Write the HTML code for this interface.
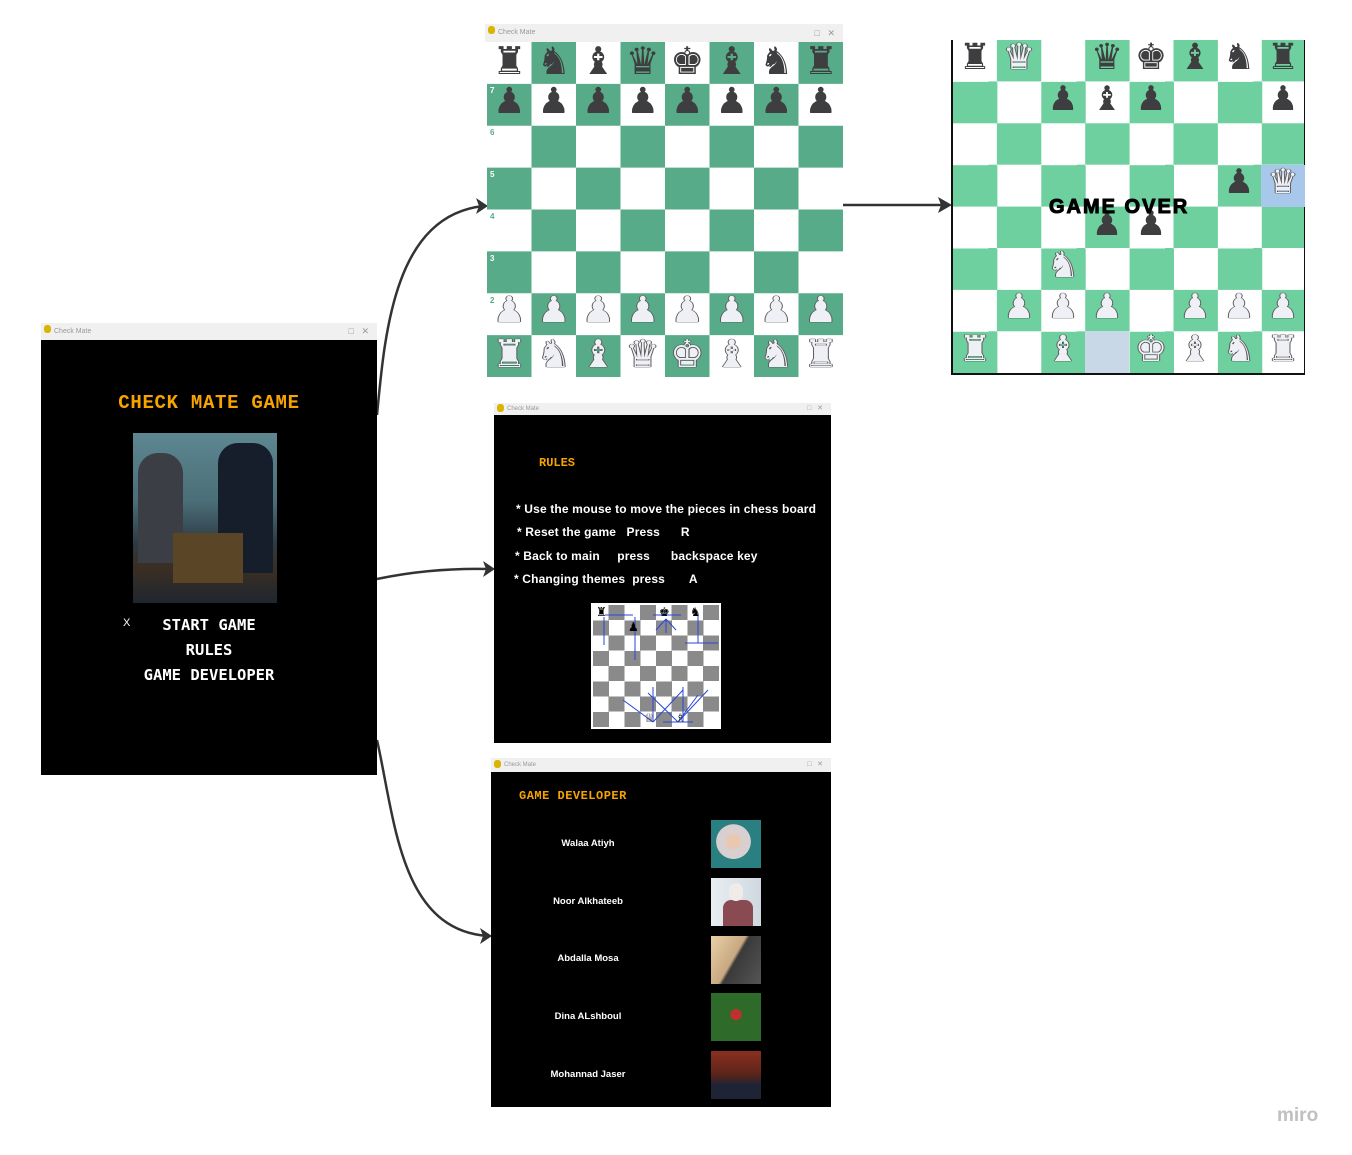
<!DOCTYPE html>
<html><head><meta charset="utf-8">
<style>
*{margin:0;padding:0;box-sizing:border-box}
body{width:1352px;height:1155px;background:#fff;position:relative;overflow:hidden;font-family:"Liberation Sans","DejaVu Sans",sans-serif}
.abs{position:absolute}
.tb{position:absolute;background:#f0f0f0;font-size:7px;color:#999;padding-left:13px;line-height:100%}
.tb i{position:absolute;left:3px;top:2px;width:7px;height:8px;background:#d9b400;border-radius:3px}
.tb b{position:absolute;right:8px;top:0;font-weight:normal;color:#999;font-size:9px}
.blk{position:absolute;background:#000}
.px{font-family:"Liberation Mono","DejaVu Sans Mono",monospace;font-weight:bold;letter-spacing:0}
.or{color:#f7a400}
.menu{color:#fff;font-weight:bold;font-family:"DejaVu Sans Mono","Liberation Mono",monospace;font-size:15.5px;text-align:center;position:absolute;width:336px;left:41px}
.board{position:absolute}
.row{display:flex}
.row span{flex:1;text-align:center;font-family:"DejaVu Sans",sans-serif;line-height:1}
.b{color:#3e3e40}
.w{color:#efeff6;text-shadow:0 0 1px #444,0 0 1px #444,1px 0 0 #666,-1px 0 0 #666}
.rules{position:absolute;left:515px;color:#fff;font-size:12px;font-weight:bold;white-space:pre;letter-spacing:0.15px}
.name{position:absolute;width:200px;left:488px;text-align:center;color:#fff;font-size:9.5px;font-weight:bold}
.ph{position:absolute;left:711px;width:50px;height:48px}
</style></head><body>

<svg class="abs" style="left:0;top:0" width="1352" height="1155">
<g fill="none" stroke="#333" stroke-width="2.5">
<path d="M377 415 C385 330 395 215 484 206"/>
<path d="M377 579 C410 572 450 568 490 569"/>
<path d="M377 740 C395 820 400 930 488 936"/>
<path d="M843 205 L946 205"/>
</g>
<g fill="#333">
<path d="M488 206 L476 198 L479 206 L476 214Z"/>
<path d="M495 569 L483 561 L486 569 L483 577Z"/>
<path d="M492 936 L480 928 L483 936 L480 944Z"/>
<path d="M952 205 L938 197 L941 205 L938 213Z"/>
</g>
</svg>

<div class="tb" style="left:41px;top:323px;width:336px;height:17px;line-height:17px"><i></i>Check Mate<b>□ &nbsp; ✕</b></div>
<div class="blk" style="left:41px;top:340px;width:336px;height:435px"></div>
<div class="abs px or" style="left:41px;width:336px;text-align:center;top:392px;font-size:19px;letter-spacing:0.7px">CHECK MATE GAME</div>
<div class="abs" style="left:133px;top:433px;width:144px;height:170px;background:linear-gradient(180deg,#5d8791 0%,#4b6e78 40%,#2d3a44 65%,#3a2e22 80%,#1f2630 100%)">
<div class="abs" style="left:5px;top:20px;width:45px;height:110px;background:#3b3f45;border-radius:20px 20px 0 0"></div>
<div class="abs" style="left:85px;top:10px;width:55px;height:130px;background:#161e2c;border-radius:20px 20px 0 0"></div>
<div class="abs" style="left:40px;top:100px;width:70px;height:50px;background:#5a4526"></div>
</div>
<div class="abs" style="left:123px;top:617px;color:#fff;font-size:11px">X</div>
<div class="menu" style="top:616px">START GAME</div>
<div class="menu" style="top:641px">RULES</div>
<div class="menu" style="top:666px">GAME DEVELOPER</div>

<div class="tb" style="left:485px;top:24px;width:358px;height:18px;line-height:18px"><i></i>Check Mate<b>□ &nbsp; ✕</b></div>
<div class="board" style="left:487px;top:42px;width:356px;height:335px;background:conic-gradient(#58ab88 0 25%,#fff 0 50%,#58ab88 0 75%,#fff 0);background-size:89px 83.75px">
<div class="row" style="height:41.9px;font-size:38px"><span class="b">♜</span><span class="b">♞</span><span class="b">♝</span><span class="b">♛</span><span class="b">♚</span><span class="b">♝</span><span class="b">♞</span><span class="b">♜</span></div>
<div class="row" style="height:41.9px;font-size:36px"><span class="b">♟</span><span class="b">♟</span><span class="b">♟</span><span class="b">♟</span><span class="b">♟</span><span class="b">♟</span><span class="b">♟</span><span class="b">♟</span></div>
<div class="row" style="height:41.9px"></div><div class="row" style="height:41.9px"></div><div class="row" style="height:41.9px"></div><div class="row" style="height:41.9px"></div>
<div class="row" style="height:41.9px;font-size:36px"><span class="w">♟</span><span class="w">♟</span><span class="w">♟</span><span class="w">♟</span><span class="w">♟</span><span class="w">♟</span><span class="w">♟</span><span class="w">♟</span></div>
<div class="row" style="height:41.9px;font-size:38px"><span class="w">♜</span><span class="w">♞</span><span class="w">♝</span><span class="w">♛</span><span class="w">♚</span><span class="w">♝</span><span class="w">♞</span><span class="w">♜</span></div>
<div class="abs" style="left:3px;top:44px;font-size:8px;color:#fff;font-weight:bold">7</div>
<div class="abs" style="left:3px;top:86px;font-size:8px;color:#58ab88;font-weight:bold">6</div>
<div class="abs" style="left:3px;top:128px;font-size:8px;color:#fff;font-weight:bold">5</div>
<div class="abs" style="left:3px;top:170px;font-size:8px;color:#58ab88;font-weight:bold">4</div>
<div class="abs" style="left:3px;top:212px;font-size:8px;color:#fff;font-weight:bold">3</div>
<div class="abs" style="left:3px;top:254px;font-size:8px;color:#58ab88;font-weight:bold">2</div>
</div>

<div class="board" style="left:951px;top:40px;width:354px;height:335px;border-left:2px solid #111;border-bottom:2px solid #111;border-right:1px solid #111;background:conic-gradient(#6dd09e 0 25%,#fff 0 50%,#6dd09e 0 75%,#fff 0);background-size:88.3px 83.3px">
<div class="abs" style="left:308px;top:125px;width:44px;height:42px;background:#a7c8ea"></div>
<div class="abs" style="left:132px;top:291px;width:44px;height:42px;background:#c9d8e6"></div>
<div class="abs" style="left:0;top:0;width:352px">
<div class="row" style="height:41.7px;font-size:36px"><span class="b">♜</span><span class="w">♛</span><span></span><span class="b">♛</span><span class="b">♚</span><span class="b">♝</span><span class="b">♞</span><span class="b">♜</span></div>
<div class="row" style="height:41.7px;font-size:34px"><span></span><span></span><span class="b">♟</span><span class="b">♝</span><span class="b">♟</span><span></span><span></span><span class="b">♟</span></div>
<div class="row" style="height:41.7px"></div>
<div class="row" style="height:41.7px;font-size:34px"><span></span><span></span><span></span><span></span><span></span><span></span><span class="b">♟</span><span class="w">♛</span></div>
<div class="row" style="height:41.7px;font-size:34px"><span></span><span></span><span></span><span class="b">♟</span><span class="b">♟</span><span></span><span></span><span></span></div>
<div class="row" style="height:41.7px;font-size:36px"><span></span><span></span><span class="w">♞</span><span></span><span></span><span></span><span></span><span></span></div>
<div class="row" style="height:41.7px;font-size:34px"><span></span><span class="w">♟</span><span class="w">♟</span><span class="w">♟</span><span></span><span class="w">♟</span><span class="w">♟</span><span class="w">♟</span></div>
<div class="row" style="height:41.7px;font-size:36px"><span class="w">♜</span><span></span><span class="w">♝</span><span></span><span class="w">♚</span><span class="w">♝</span><span class="w">♞</span><span class="w">♜</span></div>
</div>
<div class="abs" style="left:96px;top:156px;font-size:20px;font-weight:900;color:#000;letter-spacing:2px;font-family:'Liberation Sans',sans-serif;-webkit-text-stroke:1px #000">GAME OVER</div>
</div>

<div class="tb" style="left:494px;top:403px;width:337px;height:12px;line-height:12px;font-size:6px"><i style="top:1px"></i>Check Mate<b style="font-size:7px">□ &nbsp; ✕</b></div>
<div class="blk" style="left:494px;top:415px;width:337px;height:328px"></div>
<div class="abs px or" style="left:539px;top:456px;font-size:12px">RULES</div>
<div class="rules" style="top:502px;left:516px">* Use the mouse to move the pieces in chess board</div>
<div class="rules" style="top:525px;left:517px">* Reset the game   Press      R</div>
<div class="rules" style="top:549px">* Back to main     press      backspace key</div>
<div class="rules" style="top:572px;left:514px">* Changing themes  press       A</div>
<div class="abs" style="left:591px;top:603px;width:130px;height:126px;background:#fff;padding:2px">
<div style="width:126px;height:122px;background:conic-gradient(#8a8a8a 0 25%,#fff 0 50%,#8a8a8a 0 75%,#fff 0);background-size:31.5px 30.5px;position:relative">
<svg class="abs" style="left:0;top:0" width="126" height="122"><g stroke="#2846d8" stroke-width="1" fill="none">
<path d="M12 10 H40 M11 12 V40 M42 12 V55 M60 10 H88 M73 14 V28 M73 14 L63 25 M73 14 L83 25 M105 10 V38 H125 M92 38 H105 M90 82 V117 M70 117 H100 M85 117 L55 88 M85 117 L115 85 M85 117 L105 90 M60 117 L30 95 M60 117 L90 85 M60 117 V82"/></g></svg>
<div class="abs" style="left:3px;top:0;font-size:12px;color:#000">♜</div>
<div class="abs" style="left:35px;top:15px;font-size:12px;color:#000">♟</div>
<div class="abs" style="left:66px;top:0;font-size:12px;color:#000">♚</div>
<div class="abs" style="left:97px;top:0;font-size:12px;color:#000">♞</div>
<div class="abs" style="left:51px;top:106px;font-size:12px;color:#333">♕</div>
<div class="abs" style="left:82px;top:106px;font-size:12px;color:#333">♗</div>
</div></div>

<div class="tb" style="left:491px;top:758px;width:340px;height:14px;line-height:14px;font-size:6px"><i style="top:2px"></i>Check Mate<b style="font-size:7px">□ &nbsp; ✕</b></div>
<div class="blk" style="left:491px;top:772px;width:340px;height:335px"></div>
<div class="abs px or" style="left:519px;top:789px;font-size:12px;letter-spacing:0.5px">GAME DEVELOPER</div>
<div class="name" style="top:838px">Walaa Atiyh</div>
<div class="name" style="top:896px">Noor Alkhateeb</div>
<div class="name" style="top:953px">Abdalla Mosa</div>
<div class="name" style="top:1011px">Dina ALshboul</div>
<div class="name" style="top:1069px">Mohannad Jaser</div>
<div class="ph" style="top:820px;background:radial-gradient(circle at 45% 45%,#e8c8b0 0 20%,#d8d0d0 21% 45%,#2a7f80 46%)"></div>
<div class="ph" style="top:878px;background:linear-gradient(90deg,#e8eef2,#cfd8e0);"><div class="abs" style="left:12px;top:22px;width:30px;height:26px;background:#8a4a52;border-radius:8px 8px 0 0"></div><div class="abs" style="left:18px;top:5px;width:14px;height:18px;background:#f0ebe6;border-radius:7px"></div></div>
<div class="ph" style="top:936px;background:linear-gradient(120deg,#e8d0a8 0%,#c8a880 45%,#3a3a3a 50%,#555 100%)"></div>
<div class="ph" style="top:993px;background:radial-gradient(circle at 50% 45%,#c03030 0 15%,#2e6a2a 16%)"></div>
<div class="ph" style="top:1051px;background:linear-gradient(180deg,#8a3020,#5a2418 50%,#1e2436 70%)"></div>

<div class="abs" style="left:1277px;top:1105px;font-size:19px;color:#c0c0c0;font-weight:bold">miro</div>
</body></html>
